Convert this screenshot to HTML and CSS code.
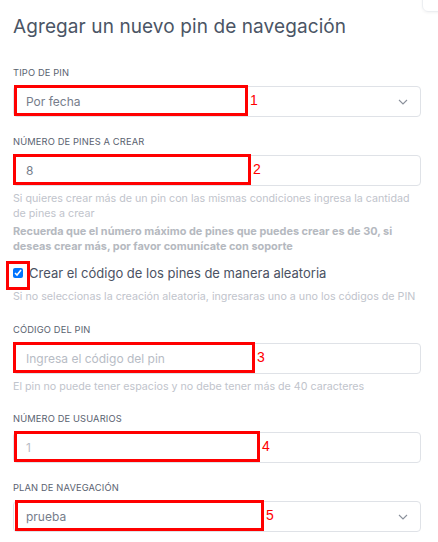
FILE: index.html
```html
<!DOCTYPE html>
<html lang="es">
<head>
  <meta charset="UTF-8">
  <title>Agregar pin de navegación</title>
  <link rel="stylesheet" href="styles.css">
</head>
<body>

<div class="corner"></div>

<form class="pin-form">
  <h1>Agregar un nuevo pin de navegación</h1>

  <!-- Tipo de pin -->
  <div class="field first">
    <label>TIPO DE PIN</label>
    <div class="control">
      <div class="select">
        <span>Por fecha</span>
        <svg class="chevron" width="10" height="6" viewBox="0 0 10 6"><path d="M1 1l4 4 4-4" fill="none" stroke="#8a909b" stroke-width="1.1"/></svg>
      </div>
      <div class="mark" style="left: 1px; width: 228px;"><span>1</span></div>
    </div>
  </div>

  <!-- Numero de pines -->
  <div class="field">
    <label>NÚMERO DE PINES A CREAR</label>
    <div class="control">
      <div class="input"><span>8</span></div>
      <div class="mark" style="left: 0; width: 232px;"><span>2</span></div>
    </div>
    <p class="help">Si quieres crear más de un pin con las mismas condiciones ingresa la cantidad de pines a crear</p>
    <p class="help bold">Recuerda que el número máximo de pines que puedes crear es de 30, si deseas crear más, por favor comunícate con soporte</p>
  </div>

  <div class="check-row">
    <div class="check-wrap">
      <input type="checkbox" checked>
      <div class="check-mark"></div>
    </div>
    <span>Crear el código de los pines de manera aleatoria</span>
  </div>
  <p class="help check-help">Si no seleccionas la creación aleatoria, ingresaras uno a uno los códigos de PIN</p>

  <!-- Codigo -->
  <div class="field after-help">
    <label>CÓDIGO DEL PIN</label>
    <div class="control">
      <div class="input"><span class="placeholder">Ingresa el código del pin</span></div>
      <div class="mark" style="left: 0; width: 236px;"><span>3</span></div>
    </div>
    <p class="help">El pin no puede tener espacios y no debe tener más de 40 caracteres</p>
  </div>

  <!-- Usuarios -->
  <div class="field">
    <label>NÚMERO DE USUARIOS</label>
    <div class="control">
      <div class="input"><span class="placeholder">1</span></div>
      <div class="mark" style="left: 1px; width: 240px;"><span>4</span></div>
    </div>
  </div>

  <!-- Plan -->
  <div class="field">
    <label>PLAN DE NAVEGACIÓN</label>
    <div class="control">
      <div class="select">
        <span>prueba</span>
        <svg class="chevron" width="10" height="6" viewBox="0 0 10 6"><path d="M1 1l4 4 4-4" fill="none" stroke="#8a909b" stroke-width="1.1"/></svg>
      </div>
      <div class="mark" style="left: 2px; width: 243px;"><span>5</span></div>
    </div>
  </div>
</form>

</body>
</html>
```

FILE: styles.css
```css
body {
  margin: 0;
  background-color: #fff;
  font-family: "Inter", "Open Sans", sans-serif;
  overflow: hidden;
}

.corner {
  position: absolute;
  top: -20px;
  right: -20px;
  width: 34px;
  height: 30px;
  border: 1px solid #eceef1;
  border-radius: 6px;
  box-shadow: 0 1px 3px rgba(0, 0, 0, 0.05);
}

.pin-form {
  padding: 0 17px 0 13px;
}

h1 {
  margin: 0;
  padding-top: 15px;
  font-size: 19px;
  line-height: 24px;
  font-weight: 400;
  color: #4b5565;
  letter-spacing: 0.1px;
}

.field {
  margin-top: 19px;
}

.field.first {
  margin-top: 28px;
}

.field.after-help {
  margin-top: 20px;
}

.field label {
  display: block;
  font-size: 9.3px;
  line-height: 11px;
  color: #5a6270;
  letter-spacing: 0.15px;
  margin-bottom: 8px;
}

.control {
  position: relative;
}

.input,
.select {
  height: 29px;
  border: 1px solid #dfe2e7;
  border-radius: 4px;
  display: flex;
  align-items: center;
  padding: 0 12px;
  font-size: 12px;
  color: #767d8b;
}

.select {
  justify-content: space-between;
}

.placeholder {
  color: #b7bcc5;
}

.mark {
  position: absolute;
  top: -1px;
  height: 25px;
  border: 3px solid #ff0000;
}

.mark span {
  position: absolute;
  left: 100%;
  top: 4px;
  margin-left: 5px;
  font-family: "Liberation Sans", sans-serif;
  font-size: 14px;
  color: #ff0000;
}

.help {
  margin: 5px 0 0;
  font-size: 10.7px;
  line-height: 15px;
  color: #bfc4cc;
}

.help.bold {
  margin-top: 3px;
  font-size: 10.9px;
  font-weight: 700;
  color: #b5b9c0;
}

.check-row {
  display: flex;
  align-items: center;
  margin-top: 11px;
  font-size: 13px;
  color: #4b5263;
}

.check-wrap {
  position: relative;
  width: 16px;
  height: 16px;
  display: flex;
  align-items: center;
}

.check-wrap input {
  margin: 0;
  width: 10px;
  height: 10px;
}

.check-mark {
  position: absolute;
  left: -7px;
  top: -4px;
  width: 18px;
  height: 23px;
  border: 3px solid #ff0000;
}

.help.check-help {
  margin-top: 8px;
}
```
